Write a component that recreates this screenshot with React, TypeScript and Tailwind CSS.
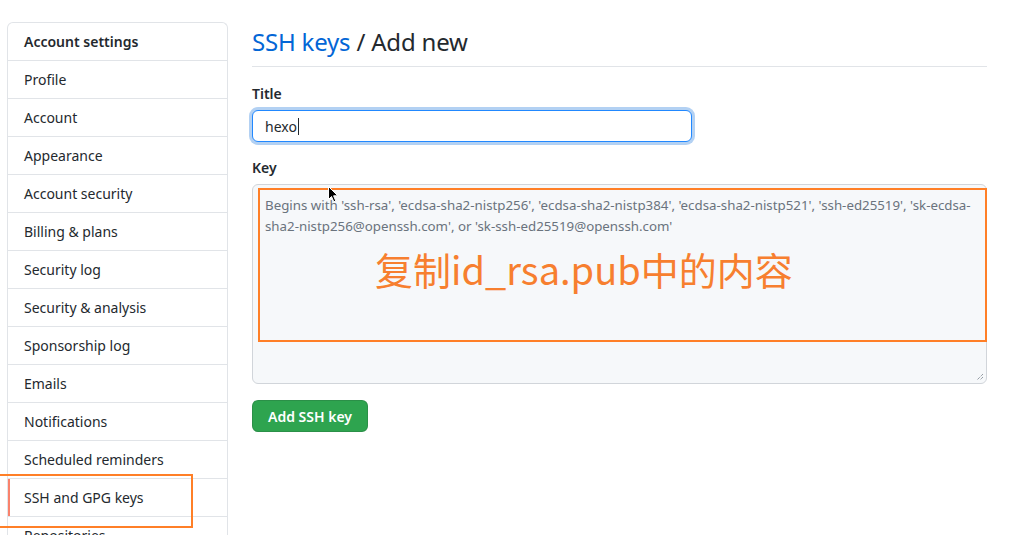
import React from 'react';

const navItems = [
  'Profile',
  'Account',
  'Appearance',
  'Account security',
  'Billing & plans',
  'Security log',
  'Security & analysis',
  'Sponsorship log',
  'Emails',
  'Notifications',
  'Scheduled reminders',
  'SSH and GPG keys',
  'Repositories',
];

const font = { fontFamily: '"Noto Sans", "Liberation Sans", sans-serif' };

function Sidebar() {
  return (
    <nav className="w-[221px] shrink-0 rounded-t-md border border-b-0 border-[#e1e4e8] bg-white">
      <div className="flex h-[37px] items-center px-4 text-[14px] font-semibold text-[#24292e]">
        Account settings
      </div>
      {navItems.map((item) => {
        const selected = item === 'SSH and GPG keys';
        return (
          <div
            key={item}
            className="relative flex h-[38px] items-center border-t border-[#e1e4e8] px-4 text-[14px] text-[#24292e]"
          >
            {selected && <span className="absolute left-0 top-0 h-full w-[2px] bg-[#f9826c]" />}
            {item}
          </div>
        );
      })}
    </nav>
  );
}

function Cursor() {
  return (
    <svg className="absolute left-[328px] top-[186px]" width="11" height="17" viewBox="0 0 11 17">
      <path d="M0.5 0.5 L0.5 13.5 L3.5 10.5 L5.8 15.8 L7.8 15 L5.6 9.8 L9.8 9.8 Z" fill="#000" stroke="#fff" strokeWidth="1" />
    </svg>
  );
}

export default function App() {
  return (
    <div className="relative h-[535px] w-[1009px] overflow-hidden bg-white" style={font}>
      <div className="flex gap-[24px] pl-[7px] pt-[22px]">
        <Sidebar />

        <main className="w-[735px]">
          <h2 className="border-b border-[#e1e4e8] pb-[8px] pt-[4px] text-[24px] font-normal leading-[32px] tracking-[-0.2px] text-[#24292e]">
            <span className="text-[#0366d6]">SSH keys</span> / Add new
          </h2>

          <form className="mt-[16px]">
            <label className="block text-[14px] font-semibold leading-[21px] text-[#24292e]">Title</label>
            <div className="mt-[6px] flex h-[32px] w-[440px] items-center rounded-md border border-[#2188ff] bg-white px-3 text-[14px] text-[#24292e] shadow-[0_0_0_3px_rgba(3,102,214,0.3)]">
              hexo
              <span className="ml-[1px] h-[17px] w-px bg-[#24292e]" />
            </div>

            <label className="mt-[15px] block text-[14px] font-semibold leading-[21px] text-[#24292e]">Key</label>
            <div className="relative mt-[6px] h-[200px] rounded-md border border-[#d1d5da] bg-[#f6f8fa] px-3 pt-[10px] text-[13.3px] leading-[21px] text-[#6a737d]">
              <div className="whitespace-nowrap">
                Begins with 'ssh-rsa', 'ecdsa-sha2-nistp256', 'ecdsa-sha2-nistp384', 'ecdsa-sha2-nistp521', 'ssh-ed25519', 'sk-ecdsa-
              </div>
              <div className="whitespace-nowrap">sha2-nistp256@openssh.com', or 'sk-ssh-ed25519@openssh.com'</div>

              {/* annotation */}
              <div className="absolute left-[5px] top-[3px] h-[154px] w-[729px] border-2 border-[#ff7f27]" />
              <div
                className="absolute left-[122px] top-[61px] text-[38px] leading-[46px] text-[#f77f2f]"
                style={{ fontFamily: '"Noto Sans CJK SC", "Noto Sans", sans-serif' }}
              >
                复制id_rsa.pub中的内容
              </div>

              {/* resize grip */}
              <svg className="absolute bottom-[2px] right-[2px]" width="8" height="8" viewBox="0 0 8 8">
                <path d="M7 1 L1 7 M7 4 L4 7" stroke="#6a737d" strokeWidth="1" strokeDasharray="1 1" />
              </svg>
            </div>

            <button
              type="button"
              className="mt-[16px] h-[32px] rounded-md border border-[rgba(27,31,35,0.15)] bg-[#2ea44f] px-[15px] text-[14px] font-semibold text-white"
            >
              Add SSH key
            </button>
          </form>
        </main>
      </div>

      {/* annotation around sidebar item */}
      <div className="absolute left-[-4px] top-[474px] h-[54px] w-[197px] border-2 border-[#ff7f27]" />
      <Cursor />
    </div>
  );
}
